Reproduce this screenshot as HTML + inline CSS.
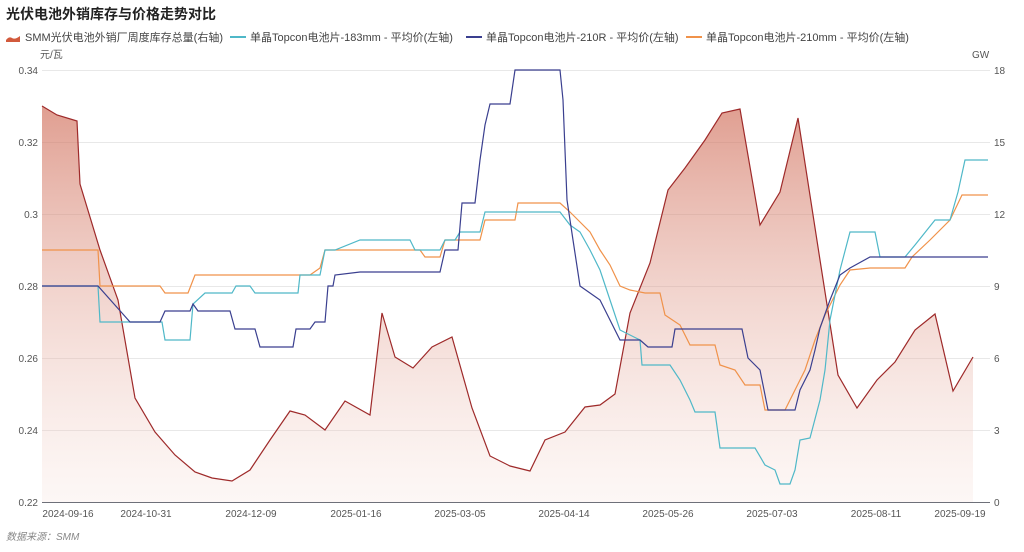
<!DOCTYPE html>
<html><head><meta charset="utf-8"><style>
body{margin:0;background:#fff;width:1024px;height:547px;overflow:hidden;font-family:"Liberation Sans","Noto Sans CJK SC",sans-serif;}
</style></head><body>
<svg width="1024" height="547" xmlns="http://www.w3.org/2000/svg" font-family="Liberation Sans, Noto Sans CJK SC, sans-serif">
<defs><linearGradient id="g" x1="0" y1="0" x2="0" y2="1">
<stop offset="0" stop-color="#cf6a55" stop-opacity="0.65"/>
<stop offset="1" stop-color="#f4d8d0" stop-opacity="0.2"/></linearGradient></defs>
<text x="6" y="19" font-size="14" font-weight="bold" fill="#222">光伏电池外销库存与价格走势对比</text>
<g font-size="11" fill="#444">
<path d="M6 40 q3-4 6-2 q3 2 8-2 v6 h-14z" fill="#d25a3c"/>
<text x="25" y="41">SMM光伏电池外销厂周度库存总量(右轴)</text>
<line x1="230" y1="37" x2="246" y2="37" stroke="#4fb8c8" stroke-width="2"/>
<text x="250" y="41">单晶Topcon电池片-183mm - 平均价(左轴)</text>
<line x1="466" y1="37" x2="482" y2="37" stroke="#3a3f8f" stroke-width="2"/>
<text x="486" y="41">单晶Topcon电池片-210R - 平均价(左轴)</text>
<line x1="686" y1="37" x2="702" y2="37" stroke="#f0924a" stroke-width="2"/>
<text x="706" y="41">单晶Topcon电池片-210mm - 平均价(左轴)</text>
</g>
<g font-size="10" fill="#555">
<text x="40" y="58">元/瓦</text><text x="972" y="58">GW</text>
<text x="38" y="74" text-anchor="end">0.34</text>
<text x="38" y="146" text-anchor="end">0.32</text>
<text x="38" y="218" text-anchor="end">0.3</text>
<text x="38" y="290" text-anchor="end">0.28</text>
<text x="38" y="362" text-anchor="end">0.26</text>
<text x="38" y="434" text-anchor="end">0.24</text>
<text x="38" y="506" text-anchor="end">0.22</text>
<text x="994" y="74">18</text><text x="994" y="146">15</text><text x="994" y="218">12</text><text x="994" y="290">9</text><text x="994" y="362">6</text><text x="994" y="434">3</text><text x="994" y="506">0</text>
</g>
<g stroke="#e8e8e8" stroke-width="1">
<line x1="42" y1="70.5" x2="990" y2="70.5"/><line x1="42" y1="142.5" x2="990" y2="142.5"/><line x1="42" y1="214.5" x2="990" y2="214.5"/><line x1="42" y1="286.5" x2="990" y2="286.5"/><line x1="42" y1="358.5" x2="990" y2="358.5"/><line x1="42" y1="430.5" x2="990" y2="430.5"/>
</g>
<path d="M42 106 L57 115 77 121 80 184 100 250 118 300 135 398 155 432 175 455 195 472 212 478 232 481 250 470 270 440 290 411 305 415 325 430 345 401 370 415 382 313 395 357 413 368 432 347 452 337 472 408 490 456 510 466 530 471 545 440 565 432 585 407 600 405 615 394 630 313 650 263 668 190 685 168 705 140 722 113 740 109 760 225 780 192 798 118 820 260 838 375 857 408 877 380 895 362 915 330 935 314 953 391 973 357 L973 502 L42 502Z" fill="url(#g)"/>
<path d="M42 106 L57 115 77 121 80 184 100 250 118 300 135 398 155 432 175 455 195 472 212 478 232 481 250 470 270 440 290 411 305 415 325 430 345 401 370 415 382 313 395 357 413 368 432 347 452 337 472 408 490 456 510 466 530 471 545 440 565 432 585 407 600 405 615 394 630 313 650 263 668 190 685 168 705 140 722 113 740 109 760 225 780 192 798 118 820 260 838 375 857 408 877 380 895 362 915 330 935 314 953 391 973 357" fill="none" stroke="#9e2a2a" stroke-width="1.2"/>
<polyline fill="none" stroke="#f0924a" stroke-width="1.2" points="42,250 98,250 100,286 160,286 165,293 188,293 195,275 310,275 320,268 325,250 420,250 425,257 440,257 445,240 480,240 485,220 515,220 518,203 560,203 570,212 590,232 600,250 610,265 620,286 630,290 645,293 660,293 665,315 680,325 690,345 715,345 720,365 735,370 745,385 760,385 765,410 785,410 795,390 805,370 815,340 825,315 840,285 850,270 870,268 905,268 912,257 930,240 950,220 962,195 988,195"/>
<polyline fill="none" stroke="#4fb8c8" stroke-width="1.2" points="42,286 98,286 100,322 162,322 165,340 190,340 193,304 205,293 232,293 236,286 250,286 255,293 298,293 300,275 320,275 325,250 335,250 360,240 410,240 415,250 440,250 445,240 455,240 460,232 480,232 485,212 560,212 570,225 580,232 590,250 600,270 610,300 620,330 640,340 642,365 670,365 680,380 690,400 695,412 715,412 720,448 755,448 765,465 775,470 780,484 790,484 795,470 800,440 810,438 820,400 825,370 830,320 840,270 850,232 875,232 880,257 905,257 915,245 935,220 950,220 958,192 965,160 988,160"/>
<polyline fill="none" stroke="#3a3f8f" stroke-width="1.2" points="42,286 98,286 130,322 160,322 165,311 190,311 193,304 198,311 230,311 235,329 255,329 260,347 293,347 296,329 310,329 315,322 325,322 328,286 333,286 335,275 360,272 440,272 445,250 458,250 462,203 475,203 480,160 485,125 490,104 510,104 515,70 560,70 563,100 567,200 573,240 580,286 600,300 610,320 620,340 640,340 648,347 672,347 675,329 742,329 748,358 760,370 768,410 795,410 800,390 810,370 815,350 820,328 830,300 840,275 850,268 870,257 988,257"/>
<line x1="42" y1="502.5" x2="990" y2="502.5" stroke="#6e7079" stroke-width="1"/>
<g font-size="10" fill="#555" text-anchor="middle">
<text x="68" y="517">2024-09-16</text><text x="146" y="517">2024-10-31</text><text x="251" y="517">2024-12-09</text><text x="356" y="517">2025-01-16</text><text x="460" y="517">2025-03-05</text><text x="564" y="517">2025-04-14</text><text x="668" y="517">2025-05-26</text><text x="772" y="517">2025-07-03</text><text x="876" y="517">2025-08-11</text><text x="960" y="517">2025-09-19</text>
</g>
<text x="6" y="540" font-size="10" font-style="italic" fill="#888">数据来源：SMM</text>
</svg>
</body></html>
